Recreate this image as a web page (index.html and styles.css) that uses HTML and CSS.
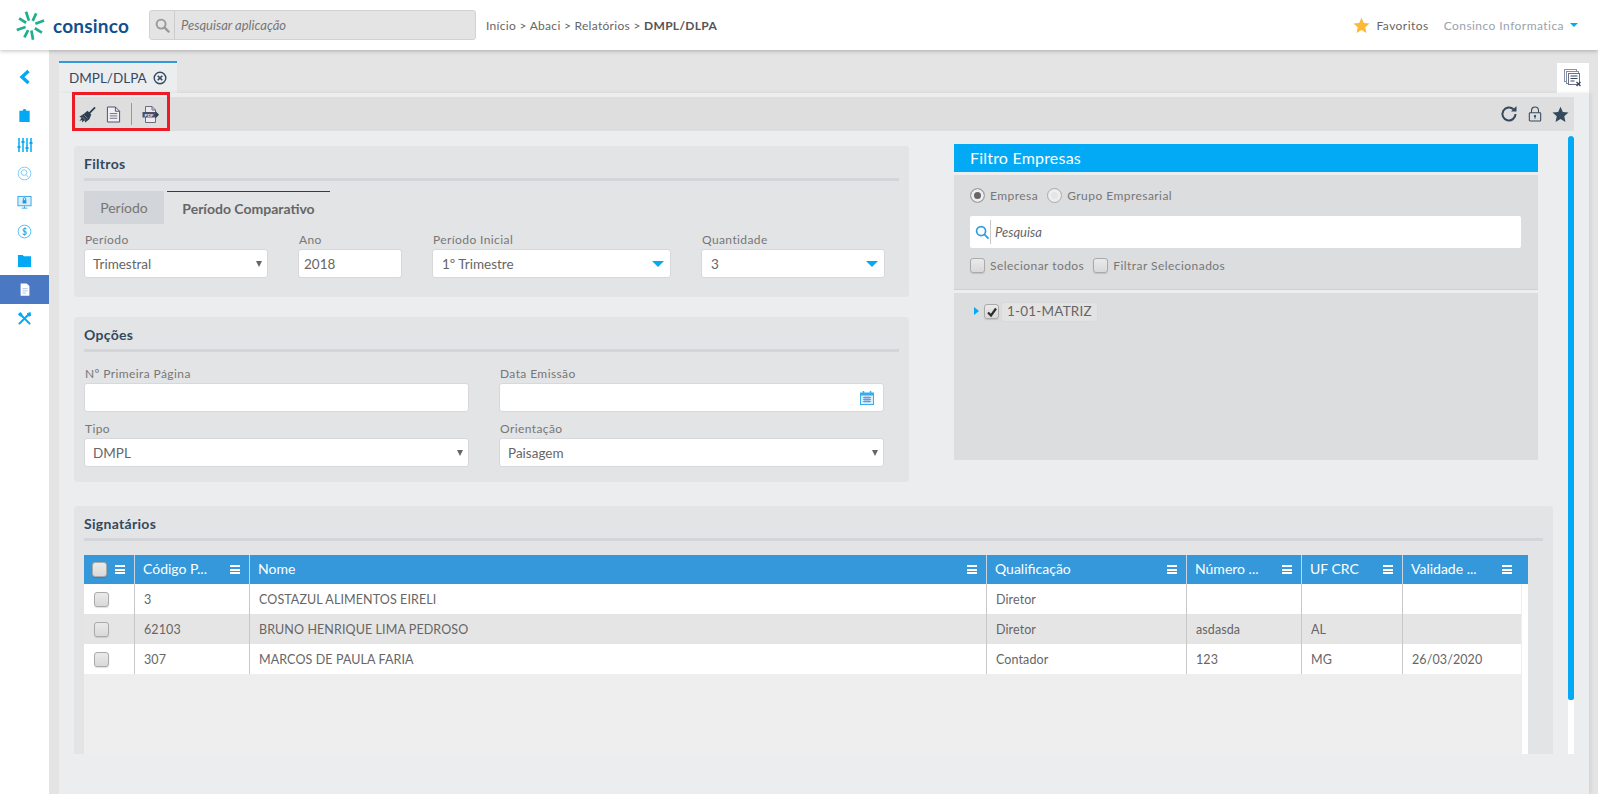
FILE: index.html
```html
<!DOCTYPE html>
<html lang="pt-BR">
<head>
<meta charset="utf-8">
<title>DMPL/DLPA</title>
<link rel="stylesheet" href="styles.css">
</head>
<body>
<header class="top">
  <div class="logo">
    <svg class="logo-mark" viewBox="0 0 30 30" width="31" height="31">
      <g stroke="#1fae8e" stroke-width="2.600">
        <path d="M15 10L15 1" transform="rotate(-18 15 15)"/>
        <path d="M15 10L15 2" transform="rotate(25 15 15)"/>
        <path d="M15 10L15 1" transform="rotate(70 15 15)"/>
        <path d="M15 10L15 2" transform="rotate(122 15 15)"/>
        <path d="M15 10L15 1" transform="rotate(170 15 15)"/>
        <path d="M15 10L15 2" transform="rotate(207 15 15)"/>
        <path d="M15 10L15 1" transform="rotate(252 15 15)"/>
        <path d="M15 10L15 2" transform="rotate(302 15 15)"/>
      </g>
    </svg>
    <span class="logo-text">consinco</span>
  </div>
  <div class="search">
    <span class="search-ico"><svg viewBox="0 0 16 16" width="15" height="15"><circle cx="6.500" cy="6.500" r="4.800" fill="none" stroke="#999" stroke-width="2"/><path d="M10 10l4.500 4.500" stroke="#999" stroke-width="2.400" stroke-linecap="round"/></svg></span>
    <span class="search-text">Pesquisar aplicação</span>
  </div>
  <nav class="crumbs">Início &gt; Abaci &gt; Relatórios &gt; <b>DMPL/DLPA</b></nav>
  <div class="top-right">
    <svg viewBox="0 0 24 24" width="17" height="17"><path d="M12 1l3.300 7.400 8 .8-6 5.400 1.700 7.900L12 18.500l-7 4 1.700-7.900-6-5.400 8-.8z" fill="#fdb933"/></svg>
    <span class="fav">Favoritos</span>
    <span class="user">Consinco Informatica</span>
    <span class="caret"></span>
  </div>
</header>

<div class="shell">
  <aside class="side">
    <div class="side-back"><svg viewBox="0 0 14 16" width="14" height="16"><path d="M10.500 2L4 8l6.500 6" fill="none" stroke="#03a9f4" stroke-width="3.400"/></svg></div>
    <div class="side-item"><svg viewBox="0 0 16 16" width="15" height="15"><path d="M2.500 3h3.500l1-2h2l1 2h3.500v12h-11z" fill="#03a9f4"/></svg></div>
    <div class="side-item"><svg viewBox="0 0 16 16" width="16" height="16"><g stroke="#03a9f4" stroke-width="1.500"><path d="M2 1v14M6 1v14M10 1v14M14 1v14"/></g><g fill="#03a9f4"><rect x=".5" y="9" width="3" height="2"/><rect x="4.500" y="4" width="3" height="2"/><rect x="8.500" y="10" width="3" height="2"/><rect x="12.500" y="5" width="3" height="2"/></g></svg></div>
    <div class="side-item"><svg viewBox="0 0 16 16" width="15" height="15"><circle cx="8" cy="8" r="6.800" fill="none" stroke="#7cc8f4" stroke-width="1"/><circle cx="7.500" cy="7" r="3" fill="none" stroke="#7cc8f4" stroke-width="1"/><path d="M10 9.500l2 2.500" stroke="#7cc8f4"/></svg></div>
    <div class="side-item"><svg viewBox="0 0 16 16" width="15" height="15"><rect x="1" y="1.500" width="14" height="10" fill="#d9effb" stroke="#2fa6e8"/><rect x="6" y="5.500" width="4" height="3.500" fill="#1e96dd"/><path d="M6.800 5.500V4a1.200 1.200 0 0 1 2.400 0v1.500" fill="none" stroke="#1e96dd"/><path d="M5 14h6M8 12v2" stroke="#2fa6e8"/></svg></div>
    <div class="side-item"><svg viewBox="0 0 16 16" width="15" height="15"><circle cx="8" cy="8" r="6.800" fill="none" stroke="#4db9f2" stroke-width="1"/><text x="8" y="11.200" class="side-dollar">$</text></svg></div>
    <div class="side-item"><svg viewBox="0 0 16 16" width="15" height="15"><path d="M1 2h5l1.500 1.500H15V15H1z" fill="#03a9f4"/></svg></div>
    <div class="side-item side-active"><svg viewBox="0 0 16 16" width="14" height="15"><path d="M3 1h7l3 3v11H3z" fill="#fff"/><path d="M5 7h6M5 9.500h6M5 12h4" stroke="#a9bfe2"/></svg></div>
    <div class="side-item"><svg viewBox="0 0 16 16" width="15" height="15"><path d="M2 14L12 4M14 14L4.500 4.500" stroke="#03a9f4" stroke-width="2.200"/><path d="M1 3.500L3.500 1l2.500 2.500-2.500 2.500zM10.500 2.500L14.500 1l.5 4-2.500 1z" fill="#03a9f4"/></svg></div>
  </aside>

  <main class="stage">
    <div class="tabbar">
      <div class="doc-tab">
        <span>DMPL/DLPA</span>
        <svg viewBox="0 0 14 14" width="14" height="14"><circle cx="7" cy="7" r="5.800" fill="none" stroke="#34495e" stroke-width="1.400"/><path d="M4.700 4.700l4.600 4.600M9.300 4.700l-4.600 4.600" stroke="#34495e" stroke-width="1.600"/></svg>
      </div>
      <div class="close-all">
        <svg viewBox="0 0 18 18" width="18" height="18"><rect x=".5" y=".5" width="12" height="12" fill="#fff" stroke="#9a8aa5"/><rect x="2.500" y="2.500" width="12" height="12" fill="#fff" stroke="#7a93ad"/><rect x="4.500" y="4.500" width="11" height="11" fill="#fff" stroke="#6f6f88"/><path d="M6.500 7h7M6.500 9.500h7M6.500 12h4" stroke="#34495e"/><path d="M12.500 13l4 4M16.500 13l-4 4" stroke="#34495e" stroke-width="1.300"/></svg>
      </div>
    </div>
    <div class="panel">
      <div class="toolbar">
        <div class="tool-group">
          <svg class="t-broom" viewBox="0 0 18 18" width="17" height="17"><path d="M17 1.500L10.500 8" stroke="#2c3e50" stroke-width="1.800"/><path d="M9 5L13 9L11 14L6.500 17.500L5.800 15L3.300 17.500L3.300 14.800L.5 15.800L2.800 12.500L.3 11.500L5 8.500Z" fill="#2c3e50"/><path d="M5.500 9.800L9 13.300M3.500 11.500L7 15" stroke="#8b98a8" stroke-width=".8"/></svg>
          <svg class="t-doc" viewBox="0 0 16 18" width="15" height="17"><path d="M1.500 1h8.500l4.500 4.500V17h-13z" fill="#f1f1f4" stroke="#4a4a72"/><path d="M10 1v4.500h4.500" fill="none" stroke="#4a4a72"/><path d="M4 8h8M4 10.500h8M4 13h8" stroke="#6b6b80"/></svg>
          <i class="tool-sep"></i>
          <svg class="t-pdf" viewBox="0 0 17 17" width="17" height="17"><path d="M3.500 .5h6.500l3.500 3.500v12.500h-10z" fill="#ececf0" stroke="#6a6a80"/><path d="M10 .5v3.500h3.500" fill="none" stroke="#6a6a80"/><rect x=".5" y="6" width="13" height="5.500" fill="#4a5068"/><path d="M13.500 5l3.500 3.700-3.500 3.700z" fill="#2c3e50"/><text x="7" y="10.600" class="pdf-txt">PDF</text></svg>
        </div>
        <div class="tool-right">
          <svg viewBox="0 0 18 18" width="18" height="18"><path d="M15.500 9a6.500 6.500 0 1 1-2-4.700" fill="none" stroke="#34495e" stroke-width="2"/><path d="M16.500 1v5.500h-5.500z" fill="#34495e"/></svg>
          <svg viewBox="0 0 16 18" width="14" height="16"><rect x="1.500" y="7.500" width="13" height="9.500" rx="1" fill="none" stroke="#34495e" stroke-width="1.200"/><path d="M4 7.500V5a4 4 0 0 1 8 0v2.500" fill="none" stroke="#34495e" stroke-width="1.200"/><circle cx="8" cy="11.500" r="1.300" fill="#34495e"/><path d="M8 12v2.500" stroke="#34495e"/></svg>
          <svg viewBox="0 0 24 24" width="17" height="17"><path d="M12 1l3.300 7.400 8 .8-6 5.400 1.700 7.900L12 18.500l-7 4 1.700-7.900-6-5.400 8-.8z" fill="#34495e"/></svg>
        </div>
      </div>

      <div class="scroller">
        <div class="scroll-content">
          <div class="upper">
            <div class="left-col">
              <section class="card card-filtros">
                <h2 class="card-title">Filtros</h2>
                <div class="tabs">
                  <div class="tab-off">Período</div>
                  <div class="tab-on">Período Comparativo</div>
                </div>
                <div class="row row-filtros">
                  <label class="field"><span class="lbl">Período</span><span class="ctl">Trimestral<i class="tri"></i></span></label>
                  <label class="field"><span class="lbl">Ano</span><span class="ctl ctl-tight">2018</span></label>
                  <label class="field"><span class="lbl">Período Inicial</span><span class="ctl ctl-wide">1º Trimestre<i class="caret-blue"></i></span></label>
                  <label class="field"><span class="lbl">Quantidade</span><span class="ctl ctl-wide">3<i class="caret-blue"></i></span></label>
                </div>
              </section>
              <section class="card card-opcoes">
                <h2 class="card-title">Opções</h2>
                <div class="row-opcoes">
                  <label class="field"><span class="lbl">Nº Primeira Página</span><span class="ctl"></span></label>
                  <label class="field"><span class="lbl">Data Emissão</span><span class="ctl"><svg class="cal" viewBox="0 0 14 14" width="14" height="14"><rect x=".5" y="2" width="13" height="11.500" fill="#d7effc" stroke="#35aef0"/><rect x=".5" y="2" width="13" height="2.500" fill="#35aef0"/><path d="M3.500 0v3M10.500 0v3" stroke="#35aef0" stroke-width="1.500"/><path d="M3 6.500h8M3 8.500h8M3 10.500h8M5 5.500v6M7 5.500v6M9 5.500v6" stroke="#6f8fd0" stroke-width=".9"/></svg></span></label>
                  <label class="field"><span class="lbl">Tipo</span><span class="ctl">DMPL<i class="tri"></i></span></label>
                  <label class="field"><span class="lbl">Orientação</span><span class="ctl">Paisagem<i class="tri"></i></span></label>
                </div>
              </section>
            </div>

            <section class="empresas">
              <h2 class="emp-head">Filtro Empresas</h2>
              <div class="emp-body">
                <div class="radios">
                  <span class="radio radio-on"></span><span class="opt">Empresa</span>
                  <span class="radio"></span><span class="opt">Grupo Empresarial</span>
                </div>
                <div class="emp-search">
                  <svg viewBox="0 0 16 16" width="15" height="15"><circle cx="6.500" cy="6.500" r="4.800" fill="none" stroke="#2a9fe6" stroke-width="1.800"/><path d="M10 10l4.500 4.500" stroke="#2a9fe6" stroke-width="2"/></svg>
                  <span class="emp-ph">Pesquisa</span>
                </div>
                <div class="checks">
                  <span class="chk"></span><span class="opt">Selecionar todos</span>
                  <span class="chk"></span><span class="opt">Filtrar Selecionados</span>
                </div>
              </div>
              <div class="emp-tree">
                <i class="tree-arrow"></i>
                <span class="chk chk-on"><svg viewBox="0 0 12 12" width="12" height="12"><path d="M2 6.500l3 3 5-7" fill="none" stroke="#2d2d2d" stroke-width="2.200"/></svg></span>
                <span class="tree-label">1-01-MATRIZ</span>
              </div>
            </section>
          </div>

          <section class="card card-sign">
            <h2 class="card-title">Signatários</h2>
            <div class="grid">
              <div class="g-head">
                <div class="gh gh-check"><span class="chk chk-head"></span><i class="menu"></i></div>
                <div class="gh">Código P...<i class="menu"></i></div>
                <div class="gh">Nome<i class="menu"></i></div>
                <div class="gh">Qualificação<i class="menu"></i></div>
                <div class="gh">Número ...<i class="menu"></i></div>
                <div class="gh">UF CRC<i class="menu"></i></div>
                <div class="gh gh-last">Validade ...<i class="menu"></i></div>
              </div>
              <div class="g-body">
                <div class="g-rows">
                  <div class="g-row">
                    <div class="gc gc-check"><span class="chk"></span></div><div class="gc">3</div><div class="gc">COSTAZUL ALIMENTOS EIRELI</div><div class="gc">Diretor</div><div class="gc"></div><div class="gc"></div><div class="gc"></div>
                  </div>
                  <div class="g-row g-alt">
                    <div class="gc gc-check"><span class="chk"></span></div><div class="gc">62103</div><div class="gc">BRUNO HENRIQUE LIMA PEDROSO</div><div class="gc">Diretor</div><div class="gc">asdasda</div><div class="gc">AL</div><div class="gc"></div>
                  </div>
                  <div class="g-row">
                    <div class="gc gc-check"><span class="chk"></span></div><div class="gc">307</div><div class="gc">MARCOS DE PAULA FARIA</div><div class="gc">Contador</div><div class="gc">123</div><div class="gc">MG</div><div class="gc">26/03/2020</div>
                  </div>
                </div>
                <div class="g-track"></div>
              </div>
            </div>
          </section>
        </div>
        <div class="vbar"><div class="vthumb"></div></div>
      </div>
    </div>
  </main>
</div>
</body>
</html>
```

FILE: styles.css
```css
* { box-sizing: border-box; }
html, body { margin: 0; height: 100%; }
body {
  width: 1598px; height: 794px; overflow: hidden;
  font-family: Lato, "Liberation Sans", sans-serif;
  color: #666; background: #e4e4e4;
  display: flex; flex-direction: column;
}
svg { display: block; flex: none; }

.top {
  height: 50px; flex: none; background: #fff;
  display: flex; align-items: center;
  box-shadow: 0 1px 4px rgba(0,0,0,.25);
  position: relative; z-index: 2;
}
.logo { display: flex; align-items: center; width: 149px; padding-left: 15px; gap: 7px; }
.logo-text { font-size: 19px; font-weight: 700; color: #11508f; letter-spacing: .2px; }
.search {
  width: 327px; height: 30px; background: #e4e4e4;
  border: 1px solid #d2d2d2; border-radius: 3px;
  display: flex; align-items: center;
}
.search-ico { width: 25px; height: 100%; display: flex; align-items: center; justify-content: center; border-right: 1px solid #ccc; }
.search-text { font-size: 13px; font-style: italic; color: #777; padding-left: 6px; }
.crumbs { margin-left: 10px; font-size: 12px; color: #666; letter-spacing: .3px; }
.crumbs b { color: #555; }
.top-right { margin-left: auto; display: flex; align-items: center; padding-right: 20px; font-size: 12px; letter-spacing: .45px; }
.fav { margin-left: 6px; color: #666; }
.user { margin-left: 15px; color: #9aa3ad; }
.caret { margin-left: 6px; width: 0; height: 0; border: 4px solid transparent; border-top: 4px solid #03a9f4; border-bottom: 0; }

.shell { flex: 1; display: flex; min-height: 0; }
.side { width: 49px; flex: none; background: #fff; padding-top: 12px; }
.side-back { height: 30px; display: flex; align-items: center; justify-content: center; margin-bottom: 9px; }
.side-item { height: 29px; display: flex; align-items: center; justify-content: center; }
.side-active { background: #4a78c2; }
.side-dollar { font: 700 9px Lato, sans-serif; fill: #2fa6e8; text-anchor: middle; }

.stage { flex: 1; min-width: 0; padding: 11px 9px 0 10px; display: flex; flex-direction: column; }
.tabbar { height: 32px; flex: none; display: flex; justify-content: space-between; align-items: flex-end; }
.doc-tab {
  width: 118px; height: 32px; border-top: 2px solid #3498db; background: #ecedef;
  display: flex; align-items: center; gap: 6px; padding-left: 10px;
  font-size: 13.500px; color: #34495e;
}
.close-all { width: 32px; height: 30px; background: #fff; display: flex; align-items: center; justify-content: center; }
.panel { flex: 1; min-height: 0; background: #ecedef; padding: 4px 15px 0 13px; box-shadow: 2px 0 4px rgba(0,0,0,.08); }
.toolbar { height: 34px; background: #dedede; display: flex; align-items: center; justify-content: space-between; padding-right: 5px; }
.tool-group {
  width: 98px; height: 39px; margin-top: -5px; padding: 5px 0 0 4px;
  border: 3px solid #ed1c24;
  display: flex; align-items: center;
}
.t-doc { margin-left: 10px; }
.tool-sep { width: 1px; height: 22px; background: #999; margin: 0 10px 0 10px; }
.pdf-txt { font: 700 4.500px Lato, sans-serif; fill: #eef0f5; text-anchor: middle; }
.tool-right { display: flex; align-items: center; gap: 10px; }

.scroller { height: 618px; margin-top: 5px; display: flex; overflow: hidden; }
.scroll-content { width: 1481px; padding-left: 2px; flex: none; }
.vbar { width: 6px; margin-left: 15px; background: #fff; }
.vthumb { height: 564px; background: #03a9f4; border-radius: 3px 3px 2px 2px; }

.upper { display: flex; gap: 45px; align-items: flex-start; padding-top: 8px; }
.left-col { width: 835px; padding-top: 2px; display: flex; flex-direction: column; gap: 20px; }

.card { background: #e3e4e6; border-radius: 4px; padding: 0 10px; }
.card-title {
  margin: 0; height: 35px; padding-top: 11px; font-size: 14px; font-weight: 700;
  color: #34495e; letter-spacing: .3px; line-height: 14px;
  border-bottom: 3px solid #d4d5d8;
}
.card-filtros { height: 151px; }
.tabs { display: flex; margin-top: 10px; height: 34px; }
.tab-off { width: 80px; height: 33px; background: #d2d5d9; display: flex; align-items: center; justify-content: center; font-size: 14px; color: #777; }
.tab-on { margin-left: 3px; width: 163px; border-top: 1px solid #2c3e50; display: flex; align-items: center; justify-content: center; font-size: 14px; font-weight: 700; color: #666; }
.row-filtros { display: grid; grid-template-columns: 184px 104px 239px 184px; column-gap: 30px; margin-top: 7px; }
.field { display: flex; flex-direction: column; min-width: 0; }
.lbl { height: 17px; line-height: 15px; font-size: 12px; color: #777; letter-spacing: .4px; padding-left: 1px; }
.ctl {
  position: relative; height: 29px; background: #fff; border-radius: 3px;
  border: 1px solid #d8d8da; display: flex; align-items: center;
  padding-left: 8px; font-size: 13.500px; color: #666;
}
.ctl-tight { padding-left: 5px; }
.ctl-wide { padding-left: 9px; }
.tri { margin-left: auto; margin-right: 5px; width: 0; height: 0; border: 3.500px solid transparent; border-top: 6px solid #666; border-bottom: 0; }
.caret-blue { margin-left: auto; margin-right: 6px; width: 0; height: 0; border: 6px solid transparent; border-top: 6px solid #03a9f4; border-bottom: 0; }
.cal { margin-left: auto; margin-right: 9px; }

.card-opcoes { height: 165px; }
.row-opcoes { display: grid; grid-template-columns: 385px 385px; column-gap: 30px; row-gap: 9px; margin-top: 14px; }

.empresas { width: 584px; }
.emp-head { margin: 0; height: 28px; background: #02aaf6; color: #fff; font-size: 16px; font-weight: 400; line-height: 28px; padding-left: 16px; letter-spacing: .2px; }
.emp-body { margin-top: 3px; height: 115px; background: #dcdddf; border-bottom: 1px solid #cfd0d2; padding: 12px 17px 0 16px; }
.radios, .checks { display: flex; align-items: center; height: 16px; font-size: 12px; color: #777; letter-spacing: .45px; }
.radio { width: 15px; height: 15px; border-radius: 50%; background: #e6e6e6; border: 1px solid #aaa; margin-right: 5px; flex: none; box-shadow: inset 0 0 0 3px #eee; }
.radio-on { background: #666; }
.opt { margin-right: 9px; }
.emp-search { margin-top: 13px; height: 32px; background: #fff; border-radius: 2px; display: flex; align-items: center; padding-left: 5px; }
.emp-ph { font-size: 13px; font-style: italic; color: #666; padding-left: 4px; border-left: 1px solid #ccc; height: 24px; line-height: 24px; }
.checks { margin-top: 9px; }
.chk { display: inline-block; width: 15px; height: 15px; background: linear-gradient(#eaeaea,#d9d9d9); border: 1px solid #aaa; border-radius: 3px; margin-right: 5px; flex: none; box-shadow: 0 1px 1px rgba(0,0,0,.12); }
.emp-tree { margin-top: 3px; height: 167px; background: #dcdddf; padding: 10px 0 0 20px; display: flex; align-items: flex-start; }
.tree-arrow { width: 0; height: 0; margin-top: 4px; margin-right: 5px; border: 4.500px solid transparent; border-left: 5px solid #03a9f4; border-right: 0; }
.chk-on { margin-top: 1px; margin-right: 3px; display: flex; align-items: center; justify-content: center; }
.tree-label { height: 18px; line-height: 17px; padding: 0 5px; background: #e3e3e3; font-size: 13.500px; color: #666; border-radius: 2px; letter-spacing: .2px; box-shadow: 0 0 1px rgba(0,0,0,.15); }

.card-sign { margin-top: 24px; height: 300px; border-radius: 4px 4px 0 0; width: 1479px; }
.grid { width: 1444px; margin-top: 14px; }
.g-head { display: grid; grid-template-columns: 51px 115px 737px 200px 115px 101px 125px; height: 29px; background: #3498db; }
.gh { position: relative; display: flex; align-items: center; padding: 0 0 2px 8px; color: #fff; font-size: 14px; border-right: 1px solid #c9d6e2; }
.gh:last-child { border-right: 0; }
.gh-check { padding-left: 8px; padding-bottom: 0; }
.gh-last .menu { right: 16px; }
.menu { position: absolute; right: 9px; top: 10px; width: 10px; height: 9px; border-top: 2px solid #fff; border-bottom: 2px solid #fff; }
.menu::after { content: ""; display: block; height: 2px; margin-top: 1.500px; background: #fff; }
.chk-head { margin-right: 0; }
.g-body { display: flex; height: 200px; background: #eee; }
.g-rows { width: 1437px; flex: none; }
.g-track { width: 7px; border-right: 6px solid #fff; }
.g-row { display: grid; grid-template-columns: 51px 115px 737px 200px 115px 101px 118px; height: 30px; background: #fff; }
.g-alt { background: #e5e5e5; }
.gc { display: flex; align-items: center; padding-left: 9px; font-size: 12.500px; color: #666; border-right: 1px solid #c8c8c8; letter-spacing: .1px; }
.gc:last-child { border-right: 0; }
.gc-check { padding-left: 10px; }
```
